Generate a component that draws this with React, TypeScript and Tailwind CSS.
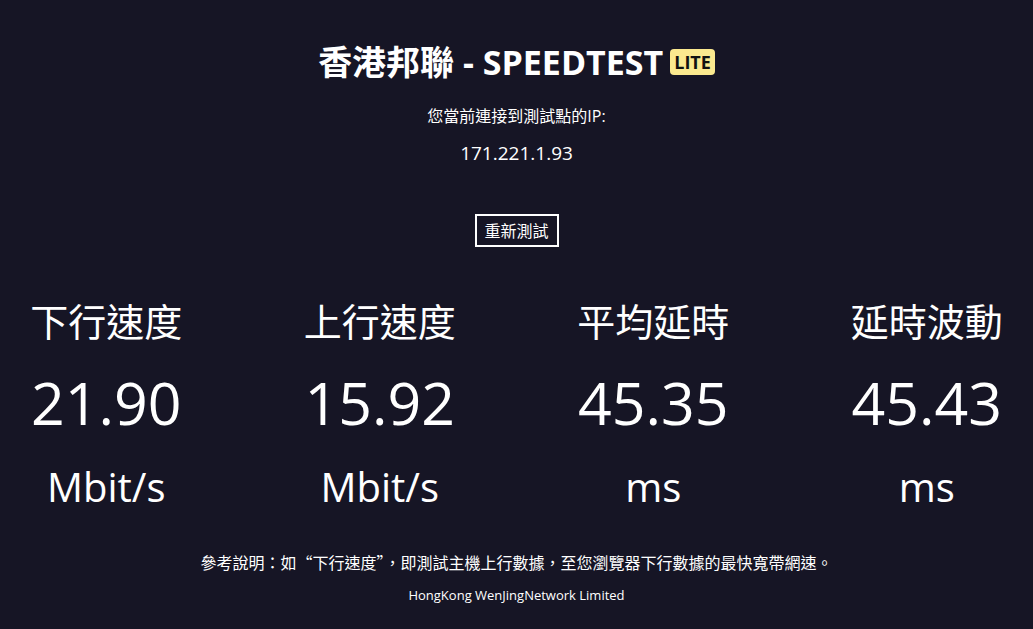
import React from "react";

const items = [
  { label: "下行速度", value: "21.90", unit: "Mbit/s" },
  { label: "上行速度", value: "15.92", unit: "Mbit/s" },
  { label: "平均延時", value: "45.35", unit: "ms" },
  { label: "延時波動", value: "45.43", unit: "ms" },
];

export default function App() {
  return (
    <div
      className="w-full min-h-[629px] bg-[#161525] text-white flex flex-col items-center overflow-hidden"
      style={{ fontFamily: '"Open Sans", "Noto Sans CJK TC", sans-serif' }}
    >
      <div className="mt-[41px] h-[42px] flex items-center gap-[7px]">
        <span className="text-[34px] font-bold leading-none">香港邦聯 - SPEEDTEST</span>
        <span className="bg-[#fbe98f] text-[#111] text-[18px] font-bold leading-none px-[4px] py-[4px] rounded-[4px]">
          LITE
        </span>
      </div>
      <div className="mt-[21px] h-[24px] flex items-center text-[16px] leading-none">您當前連接到測試點的IP:</div>
      <div className="mt-[13px] h-[24px] flex items-center text-[19px] leading-none">171.221.1.93</div>
      <button className="mt-[49px] w-[84px] h-[33px] border-2 border-white text-[16px] leading-none flex items-center justify-center">
        重新測試
      </button>
      <div className="mt-[49px] flex justify-center w-full">
        {items.map((it) => (
          <div key={it.label} className="w-[273.5px] shrink-0 flex flex-col items-center">
            <div className="h-[50px] flex items-center text-[38px] leading-none">{it.label}</div>
            <div className="mt-[26px] h-[60px] flex items-center text-[59px] leading-none">{it.value}</div>
            <div className="mt-[30px] h-[50px] flex items-center text-[40px] leading-none">{it.unit}</div>
          </div>
        ))}
      </div>
      <div
        className="mt-[39px] h-[22px] flex items-center text-[16px] leading-none"
        style={{ fontFamily: '"Noto Sans CJK TC", sans-serif', fontFeatureSettings: '"fwid"' }}
      >
        參考說明：如“下行速度”，即測試主機上行數據，至您瀏覽器下行數據的最快寬帶網速。
      </div>
      <div className="mt-[12px] h-[20px] flex items-center text-[13px] leading-none">HongKong WenJingNetwork Limited</div>
    </div>
  );
}
